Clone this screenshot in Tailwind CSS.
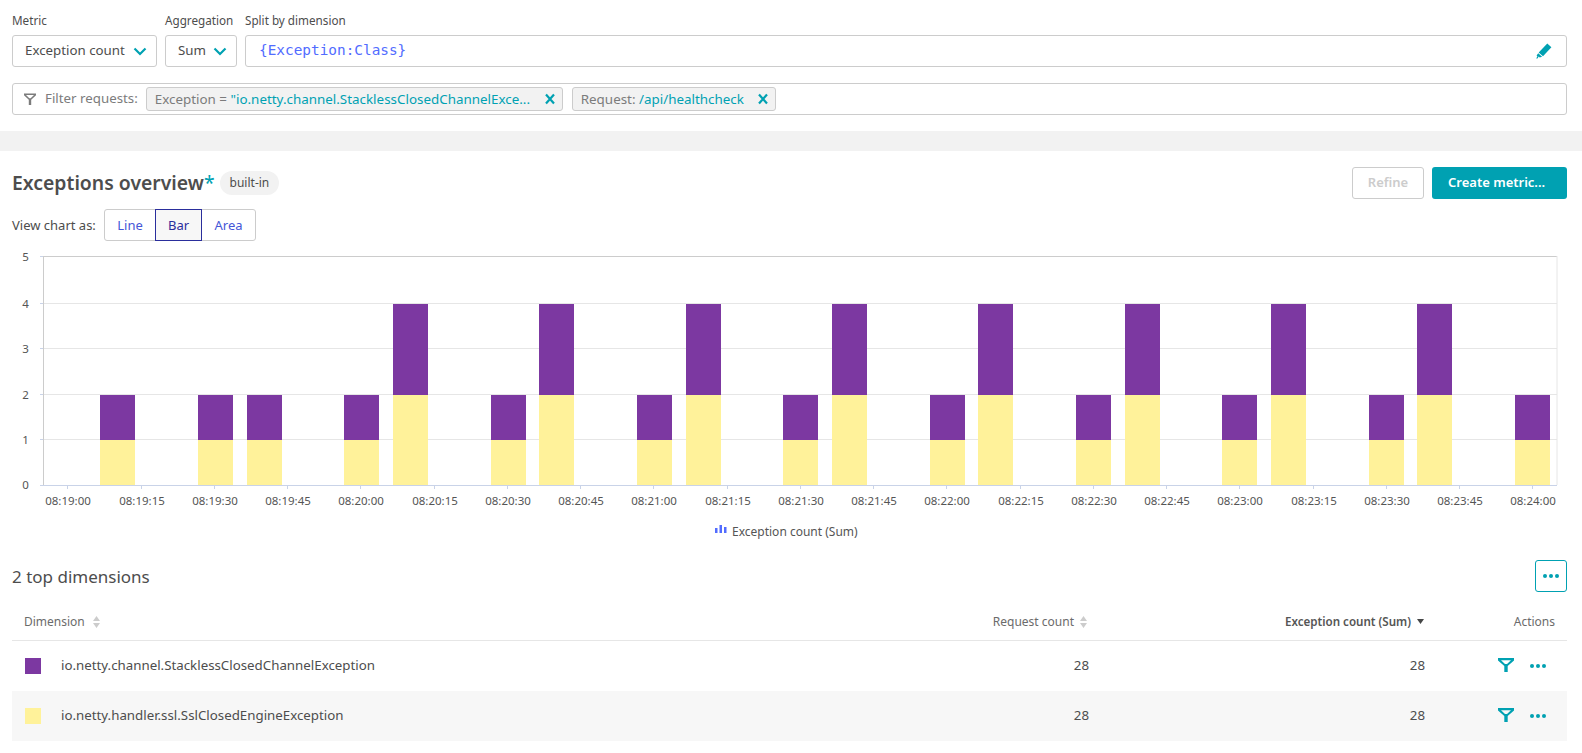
<!DOCTYPE html>
<html lang="en">
<head>
    <meta charset="UTF-8">
    <title>Exceptions overview</title>
    <script src="https://cdn.jsdelivr.net/npm/@tailwindcss/browser@4"></script>
</head>
<body class="h-[753px] overflow-hidden bg-white text-[#4d4d4d] text-[13.3px] font-['Noto_Sans',sans-serif]">
    <!-- query bar -->
    <section class="pl-3 pr-[15px] pt-[12px]">
        <div class="flex gap-2">
            <div class="w-[145px]">
                <div class="h-[16px] leading-4 text-[11.7px] mb-[7px]">Metric</div>
                <div class="h-[32px] flex items-center justify-between pl-[12px] pr-[9px] border border-[#ccc] rounded-[3px]">
                    <span>Exception count</span>
                    <svg width="14" height="9" viewBox="0 0 14 9" fill="none" stroke="#00a1b2" stroke-width="2.2"><path d="M1.5 1.5 7 7l5.500-5.500"/></svg>
                </div>
            </div>
            <div class="w-[72px]">
                <div class="h-[16px] leading-4 text-[11.7px] mb-[7px] whitespace-nowrap">Aggregation</div>
                <div class="h-[32px] flex items-center justify-between pl-[12px] pr-[9px] border border-[#ccc] rounded-[3px]">
                    <span>Sum</span>
                    <svg width="14" height="9" viewBox="0 0 14 9" fill="none" stroke="#00a1b2" stroke-width="2.2"><path d="M1.5 1.5 7 7l5.500-5.500"/></svg>
                </div>
            </div>
            <div class="flex-1">
                <div class="h-[16px] leading-4 text-[11.7px] mb-[7px]">Split by dimension</div>
                <div class="h-[32px] flex items-center justify-between pl-[13px] pr-[14px] border border-[#ccc] rounded-[3px]">
                    <span class="font-['DejaVu_Sans_Mono',monospace] text-[14.4px] text-[#526cff]">{Exception:Class}</span>
                    <svg width="16" height="16" viewBox="0 0 16 16" fill="#00a1b2"><path d="M11.300.6 15.400 4.200 7 13.200 2.700 9.400zM2.200 10.300l3.900 3.500-2.400.6-1-.9-1.200 1.900-1.300.2 1.200-2.300-.8-.8z"/></svg>
                </div>
            </div>
        </div>
        <div class="mt-4 h-[32px] flex items-center pl-[10px] border border-[#ccc] rounded-[3px]">
            <svg width="14" height="14" viewBox="0 0 14 14" fill="#7c7c7c"><path d="M1 1.500h12v1.800L8.200 7.800V13H5.800V7.800L1 3.300zM3 3l3.300 3.200h1.400L11 3z" fill-rule="evenodd"/></svg>
            <span class="ml-2 text-[#7c7c7c]">Filter requests:</span>
            <div class="ml-[8px] w-[417px] h-[24px] flex items-center justify-between px-[6px] bg-[#f2f2f2] border border-[#ccc] rounded-[3px] whitespace-nowrap text-[13.4px]">
                <span class="pl-[2px]"><span class="text-[#7c7c7c]">Exception = </span><span class="text-[#00a1b2]">"io.netty.channel.StacklessClosedChannelExce...</span></span>
                <svg width="12" height="12" viewBox="0 0 12 12" fill="none" stroke="#00a1b2" stroke-width="2.200"><path d="M2 1.500l8 9M10 1.500l-8 9"/></svg>
            </div>
            <div class="ml-[9px] w-[204px] h-[24px] flex items-center justify-between px-[6px] bg-[#f2f2f2] border border-[#ccc] rounded-[3px] whitespace-nowrap text-[13.4px]">
                <span class="pl-[2px]"><span class="text-[#7c7c7c]">Request: </span><span class="text-[#00a1b2]">/api/healthcheck</span></span>
                <svg width="12" height="12" viewBox="0 0 12 12" fill="none" stroke="#00a1b2" stroke-width="2.200"><path d="M2 1.500l8 9M10 1.500l-8 9"/></svg>
            </div>
        </div>
    </section>

    <div class="mt-4 h-5 bg-[#f2f2f2]"></div>

    <section class="pl-3 pr-[15px]">
        <!-- title row -->
        <div class="mt-4 h-[32px] flex items-center justify-between">
            <div class="flex items-center">
                <h2 class="text-[19.4px] font-semibold leading-none">Exceptions overview<span class="text-[#00a1b2] font-normal">*</span></h2>
                <span class="ml-[5px] h-[24px] px-[10px] flex items-center rounded-full bg-[#f2f2f2] text-xs">built-in</span>
            </div>
            <div class="flex gap-2">
                <button class="w-[72px] h-[32px] border border-[#ccc] rounded-[3px] text-[#ccc] font-semibold text-[13px]">Refine</button>
                <button class="w-[135px] h-[32px] pl-4 text-left rounded-[3px] bg-[#00a1b2] text-white font-semibold text-[13px]">Create metric...</button>
            </div>
        </div>
        <!-- chart type -->
        <div class="mt-[10px] h-[32px] flex items-center">
            <span class="w-[92px] pt-[2px] text-[13px]">View chart as:</span>
            <div class="flex h-[32px] border border-[#ccc] rounded-[3px] text-[#4556d7] text-[13px]">
                <span class="w-[50px] pt-px flex items-center justify-center">Line</span>
                <span class="w-[47px] pt-px -my-px flex items-center justify-center border border-[#2a2e9c] bg-[#f7f7f7] text-[#2a2e9c]">Bar</span>
                <span class="w-[53px] pt-px flex items-center justify-center">Area</span>
            </div>
        </div>
    </section>

    <!-- chart -->
    <svg id="chart" class="block mt-[8px] text-[11.5px]" width="1582" height="309" viewBox="0 249 1582 309"></svg>

    <section class="pl-3 pr-[15px]">
        <div class="mt-[2px] h-[32px] flex items-center justify-between">
            <h3 class="text-[17px] leading-none">2 top dimensions</h3>
            <button class="w-[32px] h-[32px] flex items-center justify-center gap-[2px] border border-[#00a1b2] rounded-[3px]">
                <i class="size-[4px] rounded-full bg-[#00a1b2]"></i><i class="size-[4px] rounded-full bg-[#00a1b2]"></i><i class="size-[4px] rounded-full bg-[#00a1b2]"></i>
            </button>
        </div>
        <!-- table -->
        <div class="mt-[8px] grid grid-cols-[1fr_200px_335px_140px]">
            <div class="h-[41px] pl-3 pt-[3px] flex items-center border-b border-[#e6e6e6] text-xs text-[#6b6b6b]">Dimension
                <svg class="ml-2" width="7" height="12" viewBox="0 0 7 12" fill="#ccc"><path d="M3.500 0 7 5H0zM0 7h7l-3.500 5z"/></svg>
            </div>
            <div class="h-[41px] pt-[3px] flex items-center justify-end pr-[5px] border-b border-[#e6e6e6] text-xs text-[#6b6b6b]">Request count
                <svg class="ml-[6px]" width="7" height="12" viewBox="0 0 7 12" fill="#ccc"><path d="M3.500 0 7 5H0zM0 7h7l-3.500 5z"/></svg>
            </div>
            <div class="h-[41px] pt-[3px] flex items-center justify-end pr-[3px] border-b border-[#e6e6e6] text-[11.6px] font-semibold text-[#555]">Exception count (Sum)
                <svg class="ml-[6px]" width="7" height="5" viewBox="0 0 7 5" fill="#454646"><path d="M0 0h7L3.500 5z"/></svg>
            </div>
            <div class="h-[41px] pt-[3px] flex items-center justify-end pr-3 border-b border-[#e6e6e6] text-xs text-[#6b6b6b]">Actions</div>

            <div class="h-[50px] pl-[13px] flex items-center"><i class="size-4 bg-[#7c38a1]"></i><span class="ml-5">io.netty.channel.StacklessClosedChannelException</span></div>
            <div class="h-[50px] flex items-center justify-end pr-[3px]">28</div>
            <div class="h-[50px] flex items-center justify-end pr-[2px]">28</div>
            <div class="h-[50px] flex items-center justify-end gap-[16px] pr-[21px]">
                <svg class="mb-[2px]" width="16" height="14" viewBox="0 0 16 14" fill="#00a1b2"><path d="M0 0h16v2.500L9.700 8v6H6.300V8L0 2.500zM3 2.300 7 6h2l4-3.700z" fill-rule="evenodd"/></svg>
                <span class="flex gap-[2px]"><i class="size-[4px] rounded-full bg-[#00a1b2]"></i><i class="size-[4px] rounded-full bg-[#00a1b2]"></i><i class="size-[4px] rounded-full bg-[#00a1b2]"></i></span>
            </div>

            <div class="h-[50px] pl-[13px] flex items-center bg-[#f7f7f7]"><i class="size-4 bg-[#fff29a]"></i><span class="ml-5">io.netty.handler.ssl.SslClosedEngineException</span></div>
            <div class="h-[50px] flex items-center justify-end pr-[3px] bg-[#f7f7f7]">28</div>
            <div class="h-[50px] flex items-center justify-end pr-[2px] bg-[#f7f7f7]">28</div>
            <div class="h-[50px] flex items-center justify-end gap-[16px] pr-[21px] bg-[#f7f7f7]">
                <svg class="mb-[2px]" width="16" height="14" viewBox="0 0 16 14" fill="#00a1b2"><path d="M0 0h16v2.500L9.700 8v6H6.300V8L0 2.500zM3 2.300 7 6h2l4-3.700z" fill-rule="evenodd"/></svg>
                <span class="flex gap-[2px]"><i class="size-[4px] rounded-full bg-[#00a1b2]"></i><i class="size-[4px] rounded-full bg-[#00a1b2]"></i><i class="size-[4px] rounded-full bg-[#00a1b2]"></i></span>
            </div>
        </div>
    </section>

    <script>
        const chart = document.getElementById('chart');
        const y0 = 485, left = 43.5, right = 1557;
        // gridline y per value, bar top y per value
        const gridY = [485, 439.5, 394.5, 348.5, 303.5, 256.5];
        const barY = { 1: 440, 2: 395, 4: 304 };
        let out = '';

        // grid and y axis
        gridY.forEach((y, v) => {
            if (v > 0) {
                out += `<line x1="${left}" x2="${right}" y1="${y}" y2="${y}" stroke="${v === 5 ? '#ccc' : '#e6e6e6'}"/>`;
                out += `<line x1="40" x2="${left}" y1="${y}" y2="${y}" stroke="#c9d3e8"/>`;
            }
            out += `<text x="25.500" y="${y + 4}" text-anchor="middle" fill="#555">${v}</text>`;
        });
        out += `<line x1="${left}" x2="${left}" y1="256" y2="${y0}" stroke="#ccc"/>`;
        out += `<line x1="${right}" x2="${right}" y1="256" y2="${y0}" stroke="#e6e6e6"/>`;

        // bars: slot index in 10s steps, then total height
        const bars = [[0,2],[2,2],[3,2],[5,2],[6,4],[8,2],[9,4],[11,2],[12,4],[14,2],[15,4],[17,2],[18,4],[20,2],[21,4],[23,2],[24,4],[26,2],[27,4],[29,2]];
        bars.forEach(([slot, total]) => {
            const x = Math.round(100.3 + slot * 48.78), mid = barY[total / 2], top = barY[total];
            out += `<rect x="${x}" y="${mid}" width="35" height="${y0 - mid}" fill="#fff29a"/>`;
            out += `<rect x="${x}" y="${top}" width="35" height="${mid - top}" fill="#7c38a1"/>`;
        });

        // x axis
        out += `<line x1="40" x2="${right}" y1="${y0 + 0.5}" y2="${y0 + 0.5}" stroke="#c9d3e8"/>`;
        const times = ['08:19:00','08:19:15','08:19:30','08:19:45','08:20:00','08:20:15','08:20:30','08:20:45','08:21:00','08:21:15','08:21:30','08:21:45','08:22:00','08:22:15','08:22:30','08:22:45','08:23:00','08:23:15','08:23:30','08:23:45','08:24:00'];
        times.forEach((t, i) => {
            const x = Math.round(67.3 + i * 73.25) + 0.5;
            out += `<line x1="${x}" x2="${x}" y1="${y0}" y2="${y0 + 4}" stroke="#c9d3e8"/>`;
            out += `<text x="${x + 0.5}" y="505" text-anchor="middle" fill="#555">${t}</text>`;
        });

        // legend
        out += `<rect x="715" y="528" width="2.500" height="5" fill="#526cff"/><rect x="719.500" y="525" width="2.500" height="8" fill="#526cff"/><rect x="724" y="527" width="2.500" height="6" fill="#526cff"/>`;
        out += `<text x="732" y="536" font-size="12" fill="#555">Exception count (Sum)</text>`;
        chart.innerHTML = out;
    </script>
</body>
</html>
